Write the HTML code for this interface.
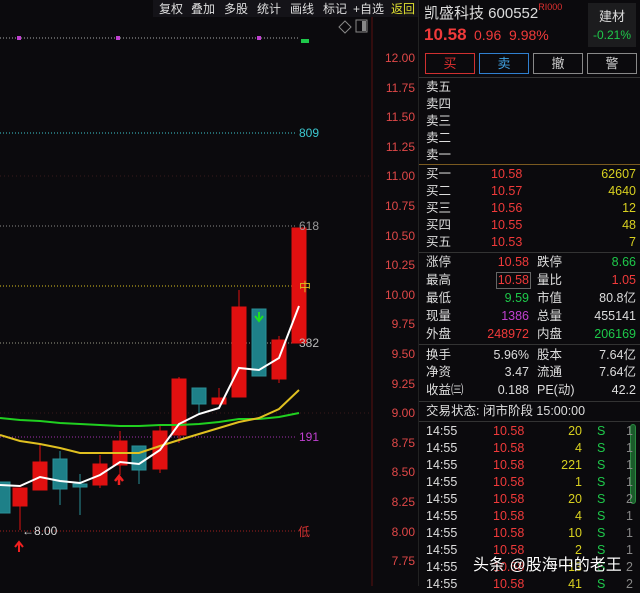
<!DOCTYPE html><html><head><meta charset="utf-8"><style>
*{margin:0;padding:0;box-sizing:border-box}
body{width:640px;height:586px;background:#0b0a0d;overflow:hidden;position:relative;font-family:"Liberation Sans","Noto Sans CJK SC",sans-serif;color:#ddd}
.a{position:absolute;white-space:nowrap}
.top{position:absolute;top:0;left:153px;width:265px;height:17px;background:#141318;font-size:12px}
.top span{position:absolute;top:0;color:#ddd}
.r{color:#f03a3a}.g{color:#1ec84a}.y{color:#d8d020}.m{color:#c040d0}.w{color:#ddd}
.row{position:absolute;left:426px;width:210px;font-size:12.5px;height:17px;line-height:17px}
.row span{position:absolute}
</style></head><body>
<div class="top"><span style="left:6px">复权</span><span style="left:38px">叠加</span><span style="left:71px">多股</span><span style="left:104px">统计</span><span style="left:137px">画线</span><span style="left:170px">标记</span><span style="left:200px">+自选</span><span style="left:238px;color:#e0e030">返回</span></div>
<svg class="a" style="left:0;top:0" width="420" height="586">
<line x1="372" y1="17" x2="372" y2="586" stroke="#5a1010"/>
<line x1="0" y1="38" x2="300" y2="38" stroke="#aaa" stroke-dasharray="1 2"/>
<rect x="17" y="36" width="4" height="4" fill="#c040d0"/><rect x="116" y="36" width="4" height="4" fill="#c040d0"/><rect x="257" y="36" width="4" height="4" fill="#c040d0"/>
<rect x="301" y="39" width="8" height="4" fill="#1ec84a"/>
<path d="M345 21l6 6-6 6-6-6z" fill="none" stroke="#888"/><rect x="356" y="20" width="11" height="12" fill="none" stroke="#888"/><rect x="362" y="21" width="4" height="10" fill="#888"/>
<g stroke="#3a1a1a" stroke-dasharray="1 3"><line x1="0" y1="176" x2="372" y2="176"/><line x1="0" y1="413" x2="372" y2="413"/></g>
<line x1="0" y1="133" x2="296" y2="133" stroke="#3cc8d0" stroke-dasharray="1 2"/>
<line x1="0" y1="226" x2="296" y2="226" stroke="#888" stroke-dasharray="1 2"/>
<line x1="0" y1="286" x2="296" y2="286" stroke="#d8c020" stroke-dasharray="1 2"/>
<line x1="0" y1="343" x2="296" y2="343" stroke="#998" stroke-dasharray="1 2"/>
<line x1="0" y1="437" x2="296" y2="437" stroke="#a030b0" stroke-dasharray="1 2"/>
<line x1="0" y1="531" x2="296" y2="531" stroke="#a02020" stroke-dasharray="1 2"/>
<g stroke-width="1">
<g stroke="#e01010" fill="#e01010">
<line x1="20" y1="488" x2="20" y2="530"/><rect x="13" y="488" width="14" height="18"/>
<line x1="40" y1="445" x2="40" y2="490"/><rect x="33" y="462" width="14" height="28"/>
<line x1="100" y1="455" x2="100" y2="488"/><rect x="93" y="464" width="14" height="21"/>
<line x1="120" y1="431" x2="120" y2="475"/><rect x="113" y="441" width="14" height="24"/>
<line x1="160" y1="425" x2="160" y2="473"/><rect x="153" y="431" width="14" height="38"/>
<line x1="179" y1="377" x2="179" y2="443"/><rect x="172" y="379" width="14" height="56"/>
<line x1="219" y1="388" x2="219" y2="404"/><rect x="212" y="398" width="14" height="6"/>
<line x1="239" y1="290" x2="239" y2="397"/><rect x="232" y="307" width="14" height="90"/>
<line x1="279" y1="336" x2="279" y2="383"/><rect x="272" y="340" width="14" height="39"/>
<rect x="292" y="228" width="14" height="115"/>
</g>
<g stroke="#2a9098" fill="#1e8088">
<rect x="-4" y="482" width="14" height="31"/>
<line x1="60" y1="451" x2="60" y2="505"/><rect x="53" y="459" width="14" height="30"/>
<line x1="80" y1="474" x2="80" y2="515"/><rect x="73" y="484" width="14" height="3"/>
<line x1="139" y1="470" x2="139" y2="484"/><rect x="132" y="446" width="14" height="24"/>
<line x1="199" y1="404" x2="199" y2="413"/><rect x="192" y="388" width="14" height="16"/>
<rect x="252" y="309" width="14" height="67"/>
</g>
</g>
<polyline fill="none" stroke="#20d020" stroke-width="2" points="0,418 20,420 40,421 60,423 80,424 100,425 120,426 139,426 160,425 179,425 199,424 219,422 239,419 259,419 279,417 299,413"/>
<polyline fill="none" stroke="#e0c020" stroke-width="2" points="0,435 20,441 40,444 60,448 80,453 100,453 120,453 139,453 160,446 179,440 199,434 219,428 239,422 259,418 279,409 299,390"/>
<polyline fill="none" stroke="#fff" stroke-width="2" points="0,485 20,486 40,477 60,481 80,483 100,475 120,462 139,464 160,450 179,424 199,414 219,408 239,368 259,370 279,358 299,306"/>
<path d="M259 312v8M255 316l4 5 4-5" stroke="#20e020" stroke-width="2" fill="none"/>
<path d="M119 485v-7M115 481l4-5 4 5" stroke="#f02020" stroke-width="2.5" fill="none"/>
<path d="M19 552v-9M15 547l4-5 4 5" stroke="#f02020" stroke-width="2" fill="none"/>
<g font-size="12" font-family="Liberation Sans,Noto Sans CJK SC,sans-serif">
<text x="299" y="137" fill="#3cc8d0">809</text><text x="299" y="230" fill="#999">618</text><text x="299" y="291" fill="#d8c020">中</text><text x="299" y="347" fill="#bbb">382</text><text x="299" y="441" fill="#c040d0">191</text><text x="298" y="536" fill="#d03030">低</text>
<text x="22" y="535" fill="#ddd">←8.00</text>
<g fill="#e04848" text-anchor="end"><text x="415" y="62">12.00</text><text x="415" y="92">11.75</text><text x="415" y="121">11.50</text><text x="415" y="151">11.25</text><text x="415" y="180">11.00</text><text x="415" y="210">10.75</text><text x="415" y="240">10.50</text><text x="415" y="269">10.25</text><text x="415" y="299">10.00</text><text x="415" y="328">9.75</text><text x="415" y="358">9.50</text><text x="415" y="388">9.25</text><text x="415" y="417">9.00</text><text x="415" y="447">8.75</text><text x="415" y="476">8.50</text><text x="415" y="506">8.25</text><text x="415" y="536">8.00</text><text x="415" y="565">7.75</text></g>
</g>
</svg>
<div class="a" style="left:418px;top:0;width:1px;height:586px;background:#222"></div>
<div class="a" style="left:424px;top:2px;font-size:15px;color:#ddd">凯盛科技 600552<span style="font-size:9px;color:#e03030;vertical-align:top">RI000</span></div>
<div class="a" style="left:588px;top:3px;width:48px;height:44px;background:#1c1c1e"></div>
<div class="a" style="left:599px;top:6px;font-size:13px;color:#ddd">建材</div>
<div class="a g" style="left:593px;top:28px;font-size:12px">-0.21%</div>
<div class="a r" style="left:424px;top:25px;font-size:17px;font-weight:bold">10.58</div>
<div class="a r" style="left:474px;top:27px;font-size:14px">0.96 &nbsp;9.98%</div>
<div class="a" style="left:425px;top:53px;width:50px;height:21px;border:1px solid #d03030;color:#e03030;font-size:13px;text-align:center;line-height:19px">买</div>
<div class="a" style="left:479px;top:53px;width:50px;height:21px;border:1px solid #3080d0;color:#40a0e0;font-size:13px;text-align:center;line-height:19px">卖</div>
<div class="a" style="left:533px;top:53px;width:50px;height:21px;border:1px solid #888;color:#ccc;font-size:13px;text-align:center;line-height:19px">撤</div>
<div class="a" style="left:587px;top:53px;width:50px;height:21px;border:1px solid #888;color:#ccc;font-size:13px;text-align:center;line-height:19px">警</div>
<div class="a" style="left:419px;top:77px;width:221px;height:1px;background:#333"></div>
<div class="row" style="top:79px">卖五</div><div class="row" style="top:96px">卖四</div><div class="row" style="top:113px">卖三</div><div class="row" style="top:130px">卖二</div><div class="row" style="top:147px">卖一</div>
<div class="a" style="left:419px;top:164px;width:221px;height:1px;background:#7a5a20"></div>
<div class="row" style="top:166px"><span>买一</span><span class="r" style="left:65px">10.58</span><span class="y" style="right:0">62607</span></div>
<div class="row" style="top:183px"><span>买二</span><span class="r" style="left:65px">10.57</span><span class="y" style="right:0">4640</span></div>
<div class="row" style="top:200px"><span>买三</span><span class="r" style="left:65px">10.56</span><span class="y" style="right:0">12</span></div>
<div class="row" style="top:217px"><span>买四</span><span class="r" style="left:65px">10.55</span><span class="y" style="right:0">48</span></div>
<div class="row" style="top:234px"><span>买五</span><span class="r" style="left:65px">10.53</span><span class="y" style="right:0">7</span></div>
<div class="a" style="left:419px;top:252px;width:221px;height:1px;background:#333"></div>
<div class="row" style="top:254px"><span>涨停</span><span class="r" style="right:107px">10.58</span><span style="left:111px">跌停</span><span class="g" style="right:0">8.66</span></div>
<div class="row" style="top:272px"><span>最高</span><span class="r" style="right:105px;border:1px solid #666;padding:0 1px;line-height:15px">10.58</span><span style="left:111px">量比</span><span class="r" style="right:0">1.05</span></div>
<div class="row" style="top:290px"><span>最低</span><span class="g" style="right:107px">9.59</span><span style="left:111px">市值</span><span style="right:0">80.8亿</span></div>
<div class="row" style="top:308px"><span>现量</span><span class="m" style="right:107px">1386</span><span style="left:111px">总量</span><span style="right:0">455141</span></div>
<div class="row" style="top:326px"><span>外盘</span><span class="r" style="right:107px">248972</span><span style="left:111px">内盘</span><span class="g" style="right:0">206169</span></div>
<div class="a" style="left:419px;top:344px;width:221px;height:1px;background:#333"></div>
<div class="row" style="top:347px"><span>换手</span><span style="right:107px">5.96%</span><span style="left:111px">股本</span><span style="right:0">7.64亿</span></div>
<div class="row" style="top:364px"><span>净资</span><span style="right:107px">3.47</span><span style="left:111px">流通</span><span style="right:0">7.64亿</span></div>
<div class="row" style="top:382px"><span>收益㈢</span><span style="right:107px">0.188</span><span style="left:111px">PE(动)</span><span style="right:0">42.2</span></div>
<div class="a" style="left:419px;top:401px;width:221px;height:1px;background:#333"></div>
<div class="row" style="top:403px">交易状态: 闭市阶段 15:00:00</div>
<div class="a" style="left:419px;top:421px;width:221px;height:1px;background:#333"></div>
<div class="a" style="left:630px;top:424px;width:6px;height:80px;border:1px solid #2a8a40;border-radius:3px;background:#1a5a2a"></div>
<div id="t"></div>
<script>
var v=[[20,1],[4,1],[221,1],[1,1],[20,2],[4,1],[10,1],[2,1],[13,2],[41,2]],h='';
v.forEach(function(a,i){var t=423+i*17;h+='<div class="row" style="top:'+t+'px"><span>14:55</span><span class="r" style="left:67px">10.58</span><span class="y" style="right:54px">'+a[0]+'</span><span class="g" style="left:171px">S</span><span style="left:200px;color:#888">'+a[1]+'</span></div>';});
document.getElementById('t').innerHTML=h;
</script>
<div class="a" style="left:473px;top:551px;font-size:16px;color:#fff;text-shadow:0 0 2px #000">头条 @股海中的老王</div>
</body></html>
